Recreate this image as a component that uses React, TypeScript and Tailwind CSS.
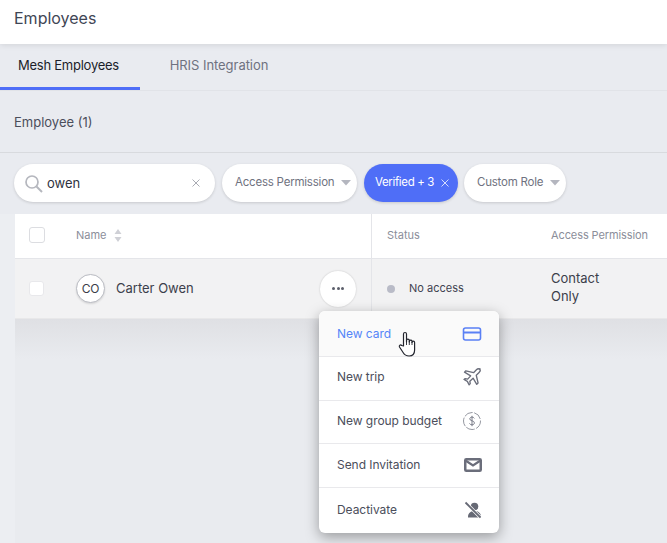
const menuItems = [
  { label: 'New card', icon: 'card', row: 'h-[46px] border-b bg-[#fafafa] text-[#5585f8]' },
  { label: 'New trip', icon: 'plane', row: 'h-[44px] border-b pb-[4px] text-[#4b4e5b]' },
  { label: 'New group budget', icon: 'dollar', row: 'h-[43px] border-b pb-[3px] text-[#4b4e5b]' },
  { label: 'Send Invitation', icon: 'mail', row: 'h-[44px] border-b pb-[2px] text-[#4b4e5b]' },
  { label: 'Deactivate', icon: 'user', row: 'h-[45px] pb-[2px] text-[#4b4e5b]' },
];

const MenuIcon = ({ name }: { name: string }) => {
  if (name === 'card') {
    return (
      <svg width="20" height="16" viewBox="0 0 20 16" fill="none" stroke="#5a80f5" strokeWidth="1.6">
        <rect x="1.5" y="2" width="17" height="12" rx="2" />
        <path d="M1.5 6.5h17" strokeWidth="2" />
      </svg>
    );
  }
  if (name === 'plane') {
    return (
      <svg width="20" height="20" viewBox="0 0 24 24" fill="none" stroke="#6b6e7b" strokeWidth="1.6" strokeLinejoin="round">
        <path d="M21.5 3c-1.2-1.1-3-.8-4.2.4l-3.4 3.4L4.6 4.6 3 6.2l7.4 4.4-3.6 3.9-3-.5L2.4 15l4 2.2 2.2 4.2 1.3-1.4-.5-3 3.9-3.6 4.4 7.4 1.6-1.6-2.2-9.3 3.4-3.4c1.2-1.2 1.6-3.4 1-4.5z" />
      </svg>
    );
  }
  if (name === 'dollar') {
    return (
      <svg width="20" height="20" viewBox="0 0 20 20" fill="none" stroke="#7a7d89">
        <circle cx="10" cy="10" r="8.5" strokeDasharray="9 1.5" strokeWidth="0.8" />
        <path d="M12.3 7.4c-.4-.9-1.2-1.3-2.3-1.3-1.3 0-2.2.7-2.2 1.8 0 2.5 4.6 1.3 4.6 4 0 1.1-1 1.9-2.4 1.9-1.2 0-2.1-.5-2.5-1.4M10 4.8v10.4" strokeWidth="1" />
      </svg>
    );
  }
  if (name === 'mail') {
    return (
      <svg width="18" height="14" viewBox="0 0 18 14" fill="none" stroke="#6b6e7b">
        <rect x="1.25" y="1.25" width="15.5" height="11.5" rx="1" strokeWidth="2.5" />
        <path d="M1.5 2.5L9 7.5l7.5-5" strokeWidth="2.2" />
      </svg>
    );
  }
  return (
    <svg width="18" height="18" viewBox="0 0 18 18" fill="#666975">
      <circle cx="10.5" cy="5.5" r="3.8" />
      <path d="M4 15.5c0-3.5 3-5.5 6.5-5.5s6.5 2 6.5 5.5v1H4z" />
      <path d="M1.5 1.5l15 15" stroke="#fff" strokeWidth="3.2" />
      <path d="M1.5 1.5l15 15" stroke="#666975" strokeWidth="1.8" />
    </svg>
  );
};

const FilterPill = ({ label, width }: { label: string; width: string }) => (
  <div className={`flex h-[38px] ${width} items-center justify-between whitespace-nowrap rounded-full bg-white pl-[13px] pr-[6px] text-[11.5px] tracking-[-0.22px] text-[#6f7280] shadow-[0_1px_3px_rgba(0,0,0,0.15)]`}>
    <span>{label}</span>
    <svg width="10" height="6" viewBox="0 0 10 6">
      <path d="M0 0h10L5 5.5z" fill="#b4b6bf" />
    </svg>
  </div>
);

export default function App() {
  return (
    <div className="relative flex h-[543px] w-[667px] flex-col overflow-hidden bg-[#eceef2] font-['Inter',sans-serif] text-[#3f4250]">
      <header className="relative z-10 flex h-[44px] shrink-0 items-start bg-white pl-[14px] pt-[8px] text-[16px] leading-[20px] text-[#3f4655] shadow-[0_1px_6px_rgba(0,0,0,0.1)]">
        Employees
      </header>

      <nav className="flex h-[47px] shrink-0 border-b border-[#e1e3e8] bg-[#e9ebf0]">
        <div className="flex w-[140px] items-center justify-center border-b-[3px] border-[#4f6ef7] pr-[3px] pt-[1px] text-[13px] tracking-[-0.25px] text-[#1c1e2a]">
          Mesh Employees
        </div>
        <div className="flex w-[158px] items-center justify-center pb-[2px] text-[13px] tracking-[-0.05px] text-[#6f7280]">
          HRIS Integration
        </div>
      </nav>

      <div className="flex h-[62px] shrink-0 items-center border-b border-[#d8dade] bg-[#e9ebf0] pl-[14px] pt-[2px] text-[13px] text-[#4b4e5b]">
        Employee (1)
      </div>

      <div className="flex shrink-0 gap-[7px] bg-[#e9ebf0] pb-[12px] pl-[14px] pt-[11px]">
        <div className="flex h-[38px] w-[201px] items-center rounded-full bg-white pl-[10px] pr-[15px] shadow-[0_1px_3px_rgba(0,0,0,0.15)]">
          <svg width="19" height="19" viewBox="0 0 19 19" fill="none" stroke="#b5b7be" strokeWidth="1.7">
            <circle cx="8" cy="8" r="6" />
            <path d="M12.5 12.5L18 18" strokeWidth="2" />
          </svg>
          <span className="ml-[4px] pt-[1px] text-[13px] text-[#2f3240]">owen</span>
          <svg width="8" height="8" viewBox="0 0 8 8" className="ml-auto" stroke="#a9abb3" strokeWidth="1">
            <path d="M0.5 0.5l7 7M7.5 0.5l-7 7" />
          </svg>
        </div>
        <FilterPill label="Access Permission" width="w-[135px]" />
        <div className="-mr-[1px] flex h-[38px] w-[94px] items-center whitespace-nowrap rounded-full bg-[#4f6ef7] pl-[11px] text-[11.5px] tracking-[-0.35px] text-white shadow-[0_1px_3px_rgba(0,0,0,0.15)]">
          Verified + 3
          <svg width="8" height="8" viewBox="0 0 8 8" className="ml-[7px]" stroke="#d5dcfd" strokeWidth="1">
            <path d="M0.5 0.5l7 7M7.5 0.5l-7 7" />
          </svg>
        </div>
        <FilterPill label="Custom Role" width="w-[102px]" />
      </div>

      <div className="ml-[15px] flex min-h-0 w-[652px] flex-1 flex-col bg-[#e9ebef]">
        <div className="flex h-[45px] shrink-0 border-b border-[#e4e5e9] bg-white text-[11px] text-[#8b8e9a]">
          <div className="flex w-[357px] items-center border-r border-[#e4e5e9] pb-[2px] pl-[14px]">
            <span className="h-[16px] w-[16px] rounded-[3px] border border-[#dcdde1] bg-white" />
            <span className="ml-[31px]">Name</span>
            <svg width="8" height="13" viewBox="0 0 8 13" className="ml-[7px]" fill="#cfd0d6">
              <path d="M4 0l3.5 5h-7zM4 13l3.5-5h-7z" />
            </svg>
          </div>
          <div className="w-[179px] self-center pb-[2px] pl-[15px]">Status</div>
          <div className="self-center whitespace-nowrap pb-[2px] tracking-[-0.1px]">Access Permission</div>
        </div>

        <div className="flex h-[60px] shrink-0 border-b border-[#e8e8e9] bg-[#f2f2f3]">
          <div className="flex w-[357px] items-center border-r border-[#e4e5e9] pl-[14px]">
            <span className="h-[15px] w-[15px] rounded-[3px] border border-[#e8e8eb] bg-white" />
            <span className="ml-[32px] flex h-[29px] w-[29px] items-center justify-center rounded-full border border-[#b9bbc2] bg-white text-[12px] tracking-[-0.2px] text-[#3a3d4a] shadow-[0_1px_2px_rgba(0,0,0,0.12)]">
              CO
            </span>
            <span className="ml-[11px] text-[13px] text-[#3c3f4c]">Carter Owen</span>
            <span className="ml-auto mr-[15px] flex h-[36px] w-[36px] items-center justify-center gap-[1.5px] rounded-full bg-white shadow-[0_0_2px_rgba(0,0,0,0.2)]">
              <i className="h-[3px] w-[3px] rounded-full bg-[#5c5f6b]" />
              <i className="h-[3px] w-[3px] rounded-full bg-[#5c5f6b]" />
              <i className="h-[3px] w-[3px] rounded-full bg-[#5c5f6b]" />
            </span>
          </div>
          <div className="flex w-[179px] items-center pl-[15px] text-[11px] text-[#3f4250]">
            <span className="h-[8px] w-[8px] rounded-full bg-[#b9bbc7]" />
            <span className="ml-[14px]">No access</span>
          </div>
          <div className="self-center pb-[4px] text-[13px] leading-[18px] text-[#3b3e4a]">
            Contact
            <br />
            Only
          </div>
        </div>

        <div className="h-[40px] shrink-0 bg-gradient-to-b from-[#dfe0e4] to-[#e9ebef]" />
      </div>

      <div className="absolute left-[319px] top-[311px] z-20 w-[180px] overflow-hidden rounded-[6px] bg-white shadow-[0_4px_14px_rgba(0,0,0,0.35)]">
        {menuItems.map((item) => (
          <div
            key={item.label}
            className={`flex items-center justify-between border-[#e9e9ec] pl-[18px] pr-[17px] text-[12px] tracking-[-0.05px] ${item.row}`}
          >
            <span>{item.label}</span>
            <MenuIcon name={item.icon} />
          </div>
        ))}
      </div>

      <svg width="20" height="26" viewBox="0 0 20 26" className="absolute left-[398px] top-[331px] z-30" fill="#fff" stroke="#23252e" strokeWidth="1.2" strokeLinejoin="round">
        <path d="M5.5 15V3a1.5 1.5 0 013 0v8-1.5a1.4 1.4 0 012.8 0V11v-.8a1.4 1.4 0 012.7 0V11.5a1.3 1.3 0 012.6 0V19c0 3.5-2 6-5.5 6-3 0-4.5-1-6-3.5L1.5 16c-.8-1.4 1-2.8 2.2-1.5z" />
        <path d="M8.5 10v4M11.3 10v4M14 11v3" strokeWidth="0.9" />
      </svg>
    </div>
  );
}
